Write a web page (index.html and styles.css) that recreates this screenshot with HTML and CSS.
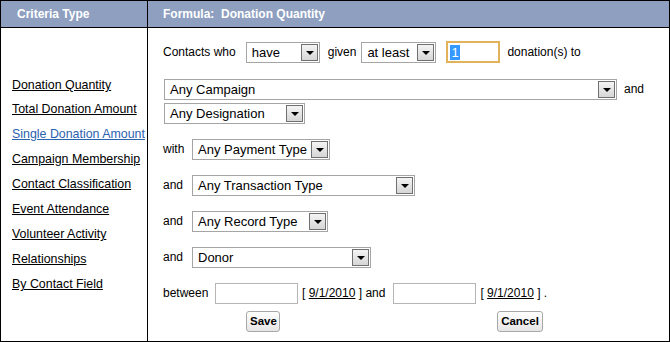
FILE: index.html
```html
<!DOCTYPE html>
<html lang="en">
<head>
    <meta charset="UTF-8">
    <title>Criteria</title>
    <link rel="stylesheet" href="styles.css">
</head>
<body>
<div class="panel">
    <div class="head head-left">Criteria Type</div>
    <div class="head head-right">Formula:&nbsp; Donation Quantity</div>

    <div class="types">
        <a href="#">Donation Quantity</a>
        <a href="#">Total Donation Amount</a>
        <a href="#" class="active">Single Donation Amount</a>
        <a href="#">Campaign Membership</a>
        <a href="#">Contact Classification</a>
        <a href="#">Event Attendance</a>
        <a href="#">Volunteer Activity</a>
        <a href="#">Relationships</a>
        <a href="#">By Contact Field</a>
    </div>

    <div class="formula">
        <div class="row r1">
            <span class="lbl">Contacts who</span>
            <span class="sel w74">have<i class="drop"></i></span>
            <span class="lbl given">given</span>
            <span class="sel w75">at least<i class="drop"></i></span>
            <span class="qty"><span class="hl">1</span></span>
            <span class="lbl">donation(s) to</span>
        </div>
        <div class="row r2">
            <span class="sel w453">Any Campaign<i class="drop"></i></span>
            <span class="lbl">and</span>
        </div>
        <div class="row r3">
            <span class="sel w141">Any Designation<i class="drop"></i></span>
        </div>
        <div class="row r4">
            <span class="lbl pre">with</span>
            <span class="sel w138">Any Payment Type<i class="drop"></i></span>
        </div>
        <div class="row r5">
            <span class="lbl pre">and</span>
            <span class="sel w223">Any Transaction Type<i class="drop"></i></span>
        </div>
        <div class="row r5">
            <span class="lbl pre">and</span>
            <span class="sel w136">Any Record Type<i class="drop"></i></span>
        </div>
        <div class="row r5">
            <span class="lbl pre">and</span>
            <span class="sel w179">Donor<i class="drop"></i></span>
        </div>
        <div class="row r8">
            <span class="lbl between">between</span>
            <span class="date"></span>
            <span class="lbl">[ <a href="#">9/1/2010</a> ] and</span>
            <span class="date"></span>
            <span class="lbl">[ <a href="#">9/1/2010</a> ] .</span>
        </div>
        <div class="row r9">
            <button class="save">Save</button>
            <button class="cancel">Cancel</button>
        </div>
    </div>
</div>
</body>
</html>
```

FILE: styles.css
```css
body {
    margin: 0;
    font-family: "Liberation Sans", Arial, sans-serif;
    font-size: 12px;
    color: #000;
    background: #fff;
}
.panel {
    width: 668px;
    height: 340px;
    border: 1px solid #000;
    display: grid;
    grid-template-columns: 146px 521px;
    grid-template-rows: 26px 1fr;
    column-gap: 1px;
    row-gap: 1px;
    background: #000;
}
.head {
    background: #8e9fc0;
    color: #fff;
    font-weight: bold;
    font-size: 12px;
    line-height: 26px;
}
.head-left {
    padding-left: 16px;
}
.head-right {
    padding-left: 15px;
}
.types {
    background: #fff;
    padding: 45px 0 0 11px;
    display: flex;
    flex-direction: column;
    font-size: 12.4px;
}
.types a {
    color: #000;
    line-height: 25px;
    height: 25px;
}
.types a:first-child {
    height: 24px;
    line-height: 24px;
}
.types a.active {
    color: #2b62b0;
}
.formula {
    background: #fff;
    padding: 13px 0 0 15px;
}
.row {
    display: flex;
    align-items: center;
    height: 22px;
}
.r2 { margin-top: 15px; }
.r3 { margin-top: 2px; }
.r4 { margin-top: 14px; }
.r5 { margin-top: 14px; }
.r8 { margin-top: 14px; }
.r9 { margin-top: 6px; }
.lbl a {
    color: #000;
}
.given {
    margin: 0 5px 0 8px;
}
.r1 .lbl:first-child {
    margin-right: 10px;
}
.pre {
    width: 29px;
}
.between {
    width: 52px;
}
.r2 .sel {
    margin-left: 1px;
    margin-right: 7px;
}
.r3 .sel {
    margin-left: 1px;
}
.sel {
    position: relative;
    box-sizing: border-box;
    height: 21px;
    border: 1px solid #a5a5a5;
    background: #fff;
    font-size: 13px;
    line-height: 19px;
    padding-left: 5px;
}
.drop {
    position: absolute;
    right: 1px;
    top: 1px;
    width: 15px;
    height: 15px;
    border: 1px solid #707070;
    background: linear-gradient(#f4f4f4, #d6d6d6);
}
.drop::after {
    content: "";
    position: absolute;
    left: 4px;
    top: 6px;
    border-left: 4px solid transparent;
    border-right: 4px solid transparent;
    border-top: 4px solid #000;
}
.w74 { width: 74px; }
.w75 { width: 75px; }
.w453 { width: 453px; }
.w141 { width: 141px; }
.w138 { width: 138px; }
.w223 { width: 223px; }
.w136 { width: 136px; }
.w179 { width: 179px; }
.qty {
    box-sizing: border-box;
    width: 54px;
    height: 22px;
    margin: 0 7px 0 10px;
    border: 2px solid #e2b25a;
    padding: 2px 0 0 2px;
    font-size: 13px;
}
.hl {
    background: #3399ff;
    color: #fff;
    display: inline-block;
    line-height: 15px;
    padding: 0 1px;
}
.date {
    box-sizing: border-box;
    width: 83px;
    height: 21px;
    border: 1px solid #b5b5b5;
    margin-right: 4px;
}
.date + .lbl + .date {
    margin-left: 8px;
}
button {
    font-family: "Liberation Sans", Arial, sans-serif;
    font-weight: bold;
    font-size: 11.5px;
    height: 21px;
    padding: 0 3px;
    border: 1px solid #a8a8a8;
    border-radius: 3px;
    background: linear-gradient(#ffffff, #e6e6e6);
    color: #000;
}
.save {
    margin-left: 83px;
    width: 34px;
}
.cancel {
    margin-left: 217px;
    width: 46px;
}
```
